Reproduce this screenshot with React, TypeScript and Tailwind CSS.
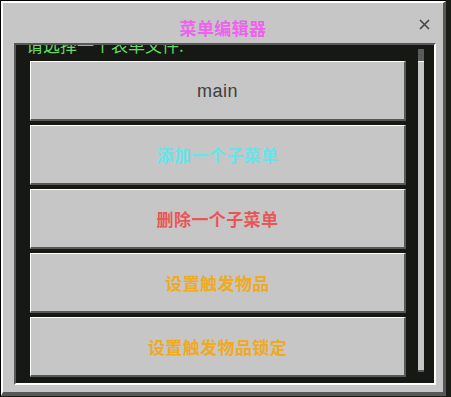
import React from 'react';

const cjk = { fontFamily: '"Noto Sans CJK SC", "Noto Sans", sans-serif' };

interface MenuButtonProps {
  label: string;
  color: string;
  latin?: boolean;
}

const MenuButton: React.FC<MenuButtonProps> = ({ label, color, latin }) => (
  <button
    className="w-[376px] h-[60px] shrink-0 flex items-center justify-center bg-[#c6c6c6] border-t border-l border-white border-r-2 border-b-2 border-r-[#585858] border-b-[#585858]"
    style={{ color }}
  >
    <span
      className={latin ? 'text-[18px] leading-[20px] tracking-[0.5px]' : 'text-[17px] leading-[20px] tracking-[0.4px] font-bold'}
      style={latin ? { fontFamily: '"Liberation Sans", Arial, sans-serif' } : cjk}
    >
      {label}
    </span>
  </button>
);

const buttons: MenuButtonProps[] = [
  { label: 'main', color: '#3e3e3e', latin: true },
  { label: '添加一个子菜单', color: '#66e4ea' },
  { label: '删除一个子菜单', color: '#e85656' },
  { label: '设置触发物品', color: '#f0aa22' },
  { label: '设置触发物品锁定', color: '#f0aa22' },
];

const App: React.FC = () => {
  return (
    <div className="min-h-screen w-full bg-[#1a1d15]">
      <div className="w-[446px] h-[396px] border-t border-l border-black">
        <div className="relative h-full flex flex-col bg-[#c6c6c6] border-t-2 border-l-2 border-white border-r-[3px] border-b-4 border-r-[#585858] border-b-[#585858]">
          {/* title */}
          <div className="h-[40px] shrink-0 pt-[14px] text-center">
            <span className="text-[17px] leading-[20px] tracking-[0.4px] font-bold text-[#ee62ee]" style={cjk}>
              菜单编辑器
            </span>
          </div>
          <button className="absolute right-[13px] top-[16px] w-[11px] h-[11px]">
            <svg viewBox="0 0 11 11" width="11" height="11">
              <path d="M1 1 L10 10 M10 1 L1 10" stroke="#444" strokeWidth="1.6" fill="none" />
            </svg>
          </button>

          {/* scroll panel */}
          <div className="ml-[11px] mr-[7px] h-[342px] shrink-0 flex border-t-2 border-l-2 border-[#585858] border-b-2 border-r-2 border-b-white border-r-white bg-[#161813]">
            <div className="w-[402px] pl-[10px] overflow-hidden flex flex-col">
              <div className="-mt-[9px] h-[17px] leading-[17px] text-[17px] text-[#62dc62] whitespace-nowrap" style={cjk}>
                请选择一个表单文件:
              </div>
              <div className="mt-[8px] ml-[4px] flex flex-col gap-[4px]">
                {buttons.map((b) => (
                  <MenuButton key={b.label} {...b} />
                ))}
              </div>
            </div>
            <div className="w-[6px] mt-[4px] mb-[11px] flex flex-col">
              <div className="h-[12px] bg-[#5c5c5c]" />
              <div className="flex-1 bg-[#c6c6c6] border-t border-white border-b-2 border-b-[#585858]" />
            </div>
          </div>
        </div>
      </div>
    </div>
  );
};

export default App;
